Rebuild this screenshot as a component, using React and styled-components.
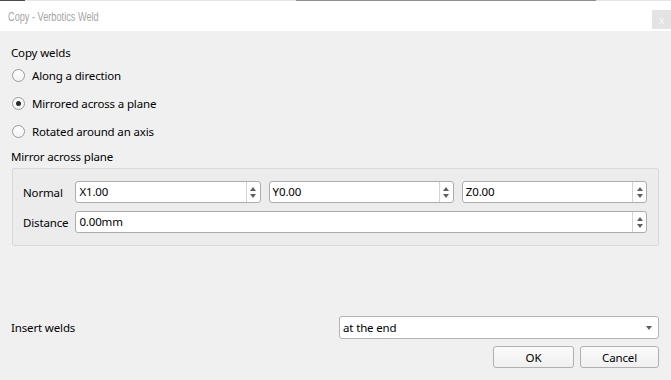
import React from "react";
import styled, { createGlobalStyle } from "styled-components";

const Global = createGlobalStyle`
  html, body { margin: 0; padding: 0; background: #f0f0f0; }
  body {
    font-family: "Noto Sans", "Liberation Sans", sans-serif;
    font-size: 11.5px;
    letter-spacing: -0.15px;
    color: #000;
  }
`;

const Window = styled.div`
  width: 671px;
  height: 380px;
  display: flex;
  flex-direction: column;
  background: #f0f0f0;
  overflow: hidden;
`;

const TopStrip = styled.div`
  height: 1px;
  display: flex;
  background: #e6e6e6;
`;

const StripSeg = styled.div`
  background: ${(p) => p.$c};
  width: ${(p) => p.$w}px;
  margin-left: ${(p) => p.$ml || 0}px;
`;

const TitleBar = styled.div`
  height: 30px;
  background: #ffffff;
  display: flex;
  align-items: center;
  justify-content: space-between;
  padding-left: 8px;
`;

const Title = styled.span`
  color: #a6a6a6;
  font-family: "Liberation Sans", sans-serif;
  font-size: 13.5px;
  letter-spacing: 0;
  display: inline-block;
  transform: scaleX(0.68);
  transform-origin: left center;
  white-space: nowrap;
`;

const CloseBtn = styled.div`
  width: 19px;
  height: 19px;
  margin-top: 6px;
  background: #e3e3e3;
  color: #f6f6f6;
  font-size: 11px;
  display: flex;
  align-items: center;
  justify-content: center;
`;

const Body = styled.div`
  flex: 1;
  display: flex;
  flex-direction: column;
  padding: 13px 12px 12px 11px;
`;

const SectionLabel = styled.div`
  height: 18px;
  line-height: 18px;
`;

const RadioList = styled.div`
  display: flex;
  flex-direction: column;
  margin-top: 4px;
  gap: 10px;
`;

const RadioRow = styled.label`
  display: flex;
  align-items: center;
  gap: 7px;
  height: 18px;
  padding-left: 1px;
`;

const RadioCircle = styled.span`
  width: 11px;
  height: 11px;
  border-radius: 50%;
  border: 1px solid #9a9a9a;
  background: linear-gradient(#ffffff, #f2f2f2);
  display: flex;
  align-items: center;
  justify-content: center;
  &::after {
    content: "";
    width: 5px;
    height: 5px;
    border-radius: 50%;
    background: ${(p) => (p.$checked ? "#2b2b2b" : "transparent")};
  }
`;

const GroupTitle = styled(SectionLabel)`
  margin-top: 8px;
`;

const GroupBox = styled.div`
  margin-top: 2px;
  margin-left: 1px;
  border: 1px solid #d9d9d9;
  border-radius: 2px;
  background: #ececec;
  padding: 12px 11px 12px 10px;
  display: grid;
  grid-template-columns: auto 1fr;
  column-gap: 7px;
  row-gap: 8px;
  align-items: center;
`;

const FieldLabel = styled.span``;

const SpinRow = styled.div`
  display: flex;
  gap: 8px;
`;

const SpinBox = styled.div`
  flex: 1;
  height: 20px;
  border: 1px solid #acacac;
  border-radius: 3px;
  background: #fff;
  display: flex;
`;

const SpinText = styled.span`
  flex: 1;
  padding-left: 3px;
  line-height: 20px;
`;

const SpinButtons = styled.span`
  width: 13px;
  border-left: 1px solid #d4d4d4;
  display: flex;
  flex-direction: column;
  align-items: center;
  justify-content: center;
  gap: 3px;
`;

const Tri = styled.span`
  width: 0;
  height: 0;
  border-left: 3.5px solid transparent;
  border-right: 3.5px solid transparent;
  ${(p) =>
    p.$down
      ? "border-top: 4px solid #5f5f5f;"
      : "border-bottom: 4px solid #5f5f5f;"}
`;

const Spacer = styled.div`
  flex: 1;
`;

const InsertRow = styled.div`
  display: flex;
  justify-content: space-between;
  align-items: center;
`;

const Combo = styled.div`
  height: 21px;
  border: 1px solid #b4b4b4;
  border-radius: 3px;
  background: #fff;
  display: flex;
  align-items: center;
  justify-content: space-between;
  padding: 0 6px 0 3px;
  box-sizing: content-box;
  width: 309px;
`;

const ButtonRow = styled.div`
  display: flex;
  justify-content: flex-end;
  gap: 6px;
  margin-top: 7px;
`;

const Button = styled.button`
  width: ${(p) => p.$w}px;
  height: 22px;
  border: 1px solid #b0b0b0;
  border-radius: 3px;
  background: linear-gradient(#fbfbfb, #f0f0f0);
  font-family: inherit;
  font-size: inherit;
  letter-spacing: inherit;
  color: #000;
  padding: 0;
`;

function Spin({ value }) {
  return (
    <SpinBox>
      <SpinText>{value}</SpinText>
      <SpinButtons>
        <Tri />
        <Tri $down />
      </SpinButtons>
    </SpinBox>
  );
}

export default function App() {
  const options = [
    { label: "Along a direction", checked: false },
    { label: "Mirrored across a plane", checked: true },
    { label: "Rotated around an axis", checked: false },
  ];
  return (
    <>
      <Global />
      <Window>
        <TopStrip>
          <StripSeg $c="#4a4a55" $w={25} />
          <StripSeg $c="#8f8f8f" $w={300} $ml={271} />
        </TopStrip>
        <TitleBar>
          <Title>Copy - Verbotics Weld</Title>
          <CloseBtn>x</CloseBtn>
        </TitleBar>
        <Body>
          <SectionLabel>Copy welds</SectionLabel>
          <RadioList>
            {options.map((o) => (
              <RadioRow key={o.label}>
                <RadioCircle $checked={o.checked} />
                {o.label}
              </RadioRow>
            ))}
          </RadioList>
          <GroupTitle>Mirror across plane</GroupTitle>
          <GroupBox>
            <FieldLabel>Normal</FieldLabel>
            <SpinRow>
              <Spin value="X1.00" />
              <Spin value="Y0.00" />
              <Spin value="Z0.00" />
            </SpinRow>
            <FieldLabel>Distance</FieldLabel>
            <SpinRow>
              <Spin value="0.00mm" />
            </SpinRow>
          </GroupBox>
          <Spacer />
          <InsertRow>
            <span>Insert welds</span>
            <Combo>
              <span>at the end</span>
              <Tri $down />
            </Combo>
          </InsertRow>
          <ButtonRow>
            <Button $w={81}>OK</Button>
            <Button $w={79}>Cancel</Button>
          </ButtonRow>
        </Body>
      </Window>
    </>
  );
}
